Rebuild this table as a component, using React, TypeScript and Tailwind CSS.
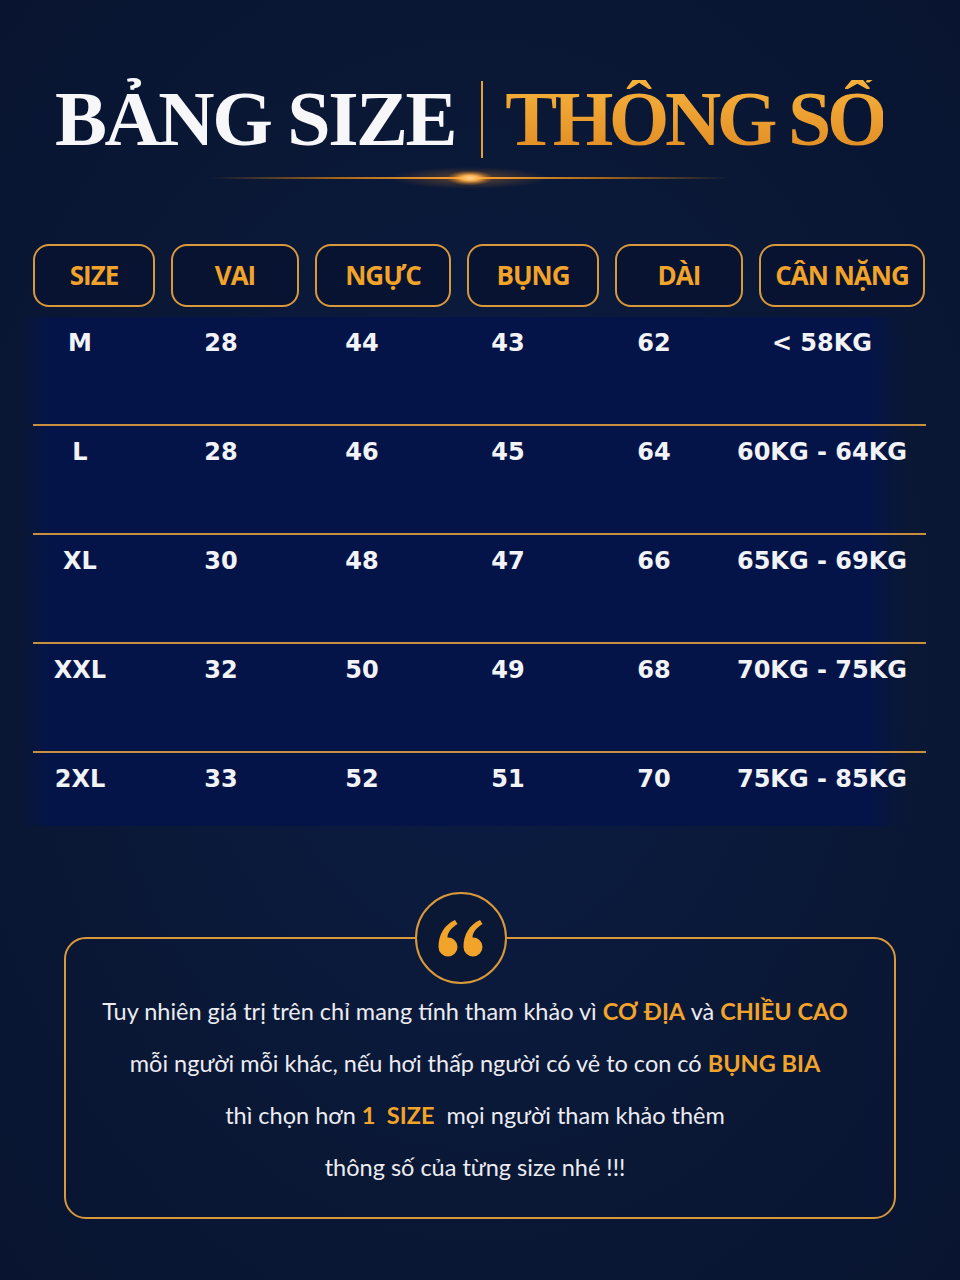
import React from "react";

const headers = [
  { label: "SIZE", cls: "w-[122px]" },
  { label: "VAI", cls: "w-[128px]" },
  { label: "NGỰC", cls: "w-[136px]" },
  { label: "BỤNG", cls: "w-[132px]" },
  { label: "DÀI", cls: "w-[128px]" },
  { label: "CÂN NẶNG", cls: "w-[166px]" }
];

const rows = [
  ["M", "28", "44", "43", "62", "< 58KG"],
  ["L", "28", "46", "45", "64", "60KG - 64KG"],
  ["XL", "30", "48", "47", "66", "65KG - 69KG"],
  ["XXL", "32", "50", "49", "68", "70KG - 75KG"],
  ["2XL", "33", "52", "51", "70", "75KG - 85KG"]
];

function QuoteMark() {
  // two heavy "66" style opening quotes
  const mark =
    "M0.5 28 C0.5 16 6 6 17 1 L19.5 5 C13 9 9.5 14 9.5 18.5 A9.5 9.5 0 1 1 0.5 28 Z";
  return (
    <svg width="48" height="42" viewBox="0 0 48 42" fill="#f2a32a">
      <path d={mark} transform="translate(1 2)" />
      <path d={mark} transform="translate(26 2)" />
    </svg>
  );
}

function Hl({ children }: { children: React.ReactNode }) {
  return <span className="font-bold text-[#f2a32a]">{children}</span>;
}

export default function App() {
  return (
    <div className="relative h-[1280px] w-[960px] overflow-hidden bg-[#0a1836] bg-[radial-gradient(ellipse_at_center,#0c1d44_0%,#0a1836_60%,#081430_100%)]">
      {/* Title */}
      <div className="flex items-center pl-[55px] pt-[80px] font-['Liberation_Serif',serif] text-[78px] font-bold leading-none">
        <span className="tracking-[-2.5px] text-[#f7f7f9]">BẢNG SIZE</span>
        <div className="ml-[26px] mr-[22px] h-[77px] w-[2px] bg-[#e6a033]" />
        <span className="bg-gradient-to-b from-[#f6b23c] to-[#e08a22] bg-clip-text tracking-[-4.5px] text-transparent">
          THÔNG SỐ
        </span>
      </div>

      {/* Glow line */}
      <div className="relative mx-auto mt-[19px] h-[2px] w-[520px] -translate-x-[10px] bg-[linear-gradient(90deg,transparent,#a8661a_25%,#ffa534_50%,#a8661a_75%,transparent)]">
        <div className="absolute left-[238px] top-[-6px] h-[14px] w-[44px] rounded-full bg-[radial-gradient(ellipse_at_center,#fff6d8_0%,#ffc060_25%,rgba(255,150,30,0.35)_55%,transparent_75%)]" />
        <div className="absolute left-[180px] top-[-10px] h-[22px] w-[160px] rounded-full bg-[radial-gradient(ellipse_at_center,rgba(255,150,40,0.35)_0%,transparent_70%)]" />
      </div>

      {/* Table header */}
      <div className="mt-[65px] flex gap-4 pl-[33px] font-['Open_Sans',sans-serif]">
        {headers.map((h) => (
          <div
            key={h.label}
            className={`${h.cls} flex h-[63px] items-center justify-center rounded-[16px] border-2 border-[#d9983a] bg-[#071331] text-[26px] font-bold tracking-[-1px] text-[#f2a32a]`}
          >
            {h.label}
          </div>
        ))}
      </div>

      {/* Table body */}
      <div className="mt-[10px] font-['DejaVu_Sans',sans-serif] text-[24px] font-bold text-[#f2f3f7]">
        {rows.map((r, i) => (
          <div key={r[0]}>
            <div
              className={`grid grid-cols-[140px_142px_140px_152px_140px_196px] pl-[10px] pt-[12px] bg-[linear-gradient(90deg,transparent_20px,#041448_50px,#041448_870px,transparent_905px)] ${
                i === rows.length - 1 ? "h-[73px]" : "h-[107px]"
              }`}
            >
              {r.map((c, j) => (
                <div key={j} className="text-center leading-[28px]">
                  {c}
                </div>
              ))}
            </div>
            {i < rows.length - 1 && (
              <div className="ml-[33px] h-[2px] w-[893px] bg-[#c8903e]" />
            )}
          </div>
        ))}
      </div>

      {/* Note box */}
      <div className="relative ml-[64px] mt-[111px] h-[282px] w-[832px] rounded-[22px] border-2 border-[#d9983a]">
        <div className="absolute left-[349px] top-[-47px] flex h-[92px] w-[92px] items-center justify-center rounded-full border-2 border-[#d9983a] bg-[#0a1836]">
          <QuoteMark />
        </div>
        <div className="pr-[10px] pt-[46px] text-center font-['Lato',sans-serif] text-[23.5px] leading-[52px] text-[#ececf2]">
          <p>
            Tuy nhiên giá trị trên chỉ mang tính tham khảo vì <Hl>CƠ ĐỊA</Hl> và{" "}
            <Hl>CHIỀU CAO</Hl>
          </p>
          <p>
            mỗi người mỗi khác, nếu hơi thấp người có vẻ to con có <Hl>BỤNG BIA</Hl>
          </p>
          <p className="whitespace-pre">
            thì chọn hơn <Hl>1  SIZE</Hl>  mọi người tham khảo thêm
          </p>
          <p>thông số của từng size nhé !!!</p>
        </div>
      </div>
    </div>
  );
}
